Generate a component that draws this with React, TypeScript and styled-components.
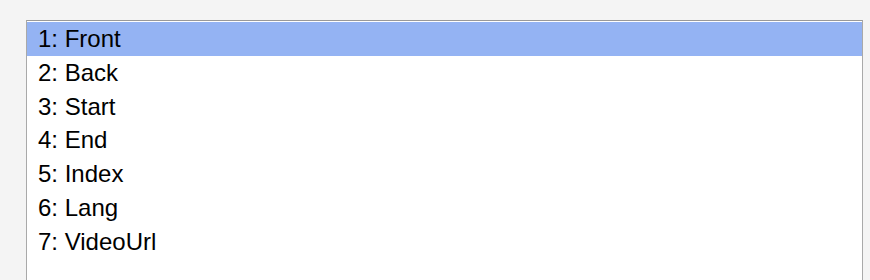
import React from "react";
import styled, { createGlobalStyle } from "styled-components";

const Global = createGlobalStyle`
  html, body { margin: 0; padding: 0; background: #f4f4f4; }
  body { font-family: "Liberation Sans", Arial, sans-serif; }
`;

const Page = styled.div`
  padding: 20px 8px 0 26px;
  height: 280px;
  box-sizing: border-box;
  overflow: hidden;
`;

const ListBox = styled.div`
  width: 837px;
  height: 300px;
  box-sizing: border-box;
  background: #ffffff;
  border-top: 1px solid #999999;
  border-left: 1px solid #a9a9a9;
  border-right: 1px solid #a9a9a9;
  padding-top: 1px;
  display: flex;
  flex-direction: column;
`;

const Option = styled.div<{ $selected?: boolean }>`
  height: 33.83px;
  display: flex;
  align-items: center;
  padding-left: 11px;
  font-size: 24px;
  color: #000;
  background: ${(p) => (p.$selected ? "#94b3f3" : "transparent")};
  white-space: nowrap;
`;

const items = ["Front", "Back", "Start", "End", "Index", "Lang", "VideoUrl"];

export default function App() {
  return (
    <>
      <Global />
      <Page>
        <ListBox>
          {items.map((it, i) => (
            <Option key={it} $selected={i === 0}>
              {i + 1}: {it}
            </Option>
          ))}
        </ListBox>
      </Page>
    </>
  );
}
